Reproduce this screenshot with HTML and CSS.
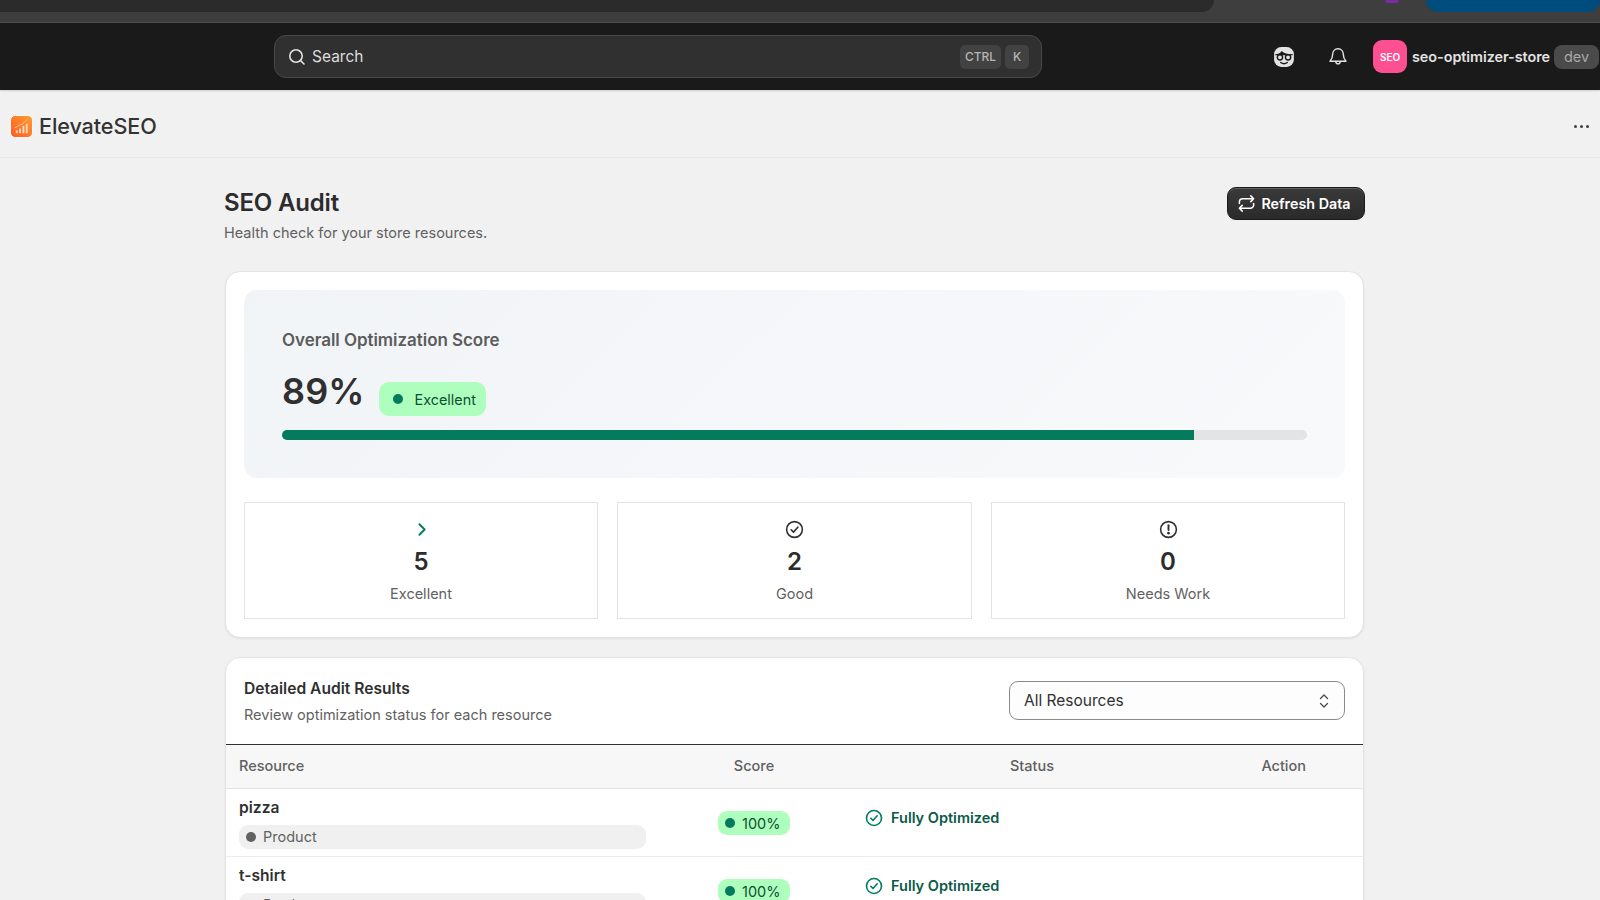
FILE: index.html
```html
<!DOCTYPE html>
<html lang="en">
<head>
<meta charset="utf-8">
<title>ElevateSEO - SEO Audit</title>
<link rel="stylesheet" href="styles.css">
</head>
<body>
<div class="chrome">
  <div class="chrome-tab"></div>
  <div class="chrome-dot"></div>
  <div class="chrome-blue"></div>
</div>
<header class="topbar">
  <div class="search">
    <svg class="search-icon" viewBox="0 0 20 20" fill="none" stroke="#e3e3e3" stroke-width="1.6" stroke-linecap="round"><circle cx="9" cy="9" r="6.2"/><path d="M13.6 13.6 17 17"/></svg>
    <span class="search-text">Search</span>
    <span class="kbd kbd-ctrl">CTRL</span>
    <span class="kbd kbd-k">K</span>
  </div>
  <div class="top-actions">
    <svg class="face" viewBox="0 0 20 20"><rect x="1" y="1" width="18" height="18" rx="6.500" fill="#e3e3e3"/><path d="M2 7.500c2.500 0 4.500-1 6-3 1.800 2 5 3 10 3v1H2z" fill="#1a1a1a"/><circle cx="6.300" cy="10.300" r="2.400" fill="#e3e3e3" stroke="#1a1a1a" stroke-width="1.300"/><circle cx="13.700" cy="10.300" r="2.400" fill="#e3e3e3" stroke="#1a1a1a" stroke-width="1.300"/><path d="M7 15c2 1.400 4 1.400 6 0" fill="none" stroke="#1a1a1a" stroke-width="1.300" stroke-linecap="round"/></svg>
    <svg class="bell" viewBox="0 0 20 20" fill="none" stroke="#e3e3e3" stroke-width="1.400" stroke-linecap="round" stroke-linejoin="round"><path d="M10 1.800c-3.200 0-5.300 2.400-5.300 5.500 0 3.200-.8 5-2.700 7h16c-1.900-2-2.700-3.800-2.700-7 0-3.100-2.100-5.500-5.300-5.500z"/><path d="M7.800 14.500c0 3.200 4.400 3.200 4.400 0"/></svg>
    <div class="avatar">SEO</div>
    <span class="store">seo-optimizer-store</span>
    <span class="dev">dev</span>
  </div>
</header>
<div class="appbar">
  <div class="brand">
    <svg class="logo" viewBox="0 0 24 24"><defs><linearGradient id="lg" x1="1" y1="0" x2="0" y2="1"><stop offset="0" stop-color="#ff9d2e"/><stop offset="1" stop-color="#fb5a24"/></linearGradient></defs><rect x=".5" y=".5" width="23" height="23" rx="5" fill="url(#lg)" stroke="#fff"/><path d="M7 19v-3M10.500 19v-5M14 19v-7.500M17.500 19V9" stroke="#ffd9bd" stroke-width="2" fill="none"/><path d="M5 13.500l5-3 3-1 5-5" stroke="#ffc9a0" stroke-width="1" fill="none"/></svg>
    <span class="brand-name">ElevateSEO</span>
  </div>
  <div class="more"><i></i><i></i><i></i></div>
</div>
<div class="viewport">
<main class="page">
  <div class="page-head">
    <div>
      <h1 class="page-title">SEO Audit</h1>
      <p class="page-sub">Health check for your store resources.</p>
    </div>
    <button class="refresh">
      <svg class="refresh-icon" viewBox="0 0 20 20" fill="none" stroke="#fff" stroke-width="1.600" stroke-linecap="round" stroke-linejoin="round"><path d="M2.500 10V8.500a3.500 3.500 0 0 1 3.500-3.500h11.500M14.500 2l3 3-3 3M17.500 10v1.500a3.500 3.500 0 0 1-3.500 3.500H2.500M5.500 18l-3-3 3-3"/></svg>
      Refresh Data
    </button>
  </div>

  <section class="card score-card">
    <div class="score-panel">
      <div class="score-label">Overall Optimization Score</div>
      <div class="score-row">
        <span class="score-value">89%</span>
        <span class="badge-lg"><i class="dot"></i>Excellent</span>
      </div>
      <div class="progress"><div class="progress-fill" style="width:89%"></div></div>
    </div>
    <div class="stats">
      <div class="stat">
        <svg class="stat-icon" viewBox="0 0 20 20" fill="none" stroke="#047b5d" stroke-width="1.800" stroke-linecap="round" stroke-linejoin="round"><path d="M8 5l5 5-5 5"/></svg>
        <div class="stat-num">5</div>
        <div class="stat-label">Excellent</div>
      </div>
      <div class="stat">
        <svg class="stat-icon" viewBox="0 0 20 20" fill="none" stroke="#303030" stroke-width="1.500" stroke-linecap="round" stroke-linejoin="round"><circle cx="10" cy="10" r="7.500"/><path d="M6.800 10.300l2.200 2.200 4.200-4.700"/></svg>
        <div class="stat-num">2</div>
        <div class="stat-label">Good</div>
      </div>
      <div class="stat">
        <svg class="stat-icon" viewBox="0 0 20 20" fill="none" stroke="#303030" stroke-width="1.500" stroke-linecap="round"><circle cx="10" cy="10" r="7.500"/><path d="M10 6v4.500" stroke-width="1.800"/><circle cx="10" cy="13.500" r=".6" fill="#303030"/></svg>
        <div class="stat-num">0</div>
        <div class="stat-label">Needs Work</div>
      </div>
    </div>
  </section>

  <section class="card results-card">
    <div class="results-head">
      <div>
        <h2 class="results-title">Detailed Audit Results</h2>
        <p class="results-sub">Review optimization status for each resource</p>
      </div>
      <div class="select">
        <span>All Resources</span>
        <svg class="select-icon" viewBox="0 0 12 20" fill="none" stroke="#4a4a4a" stroke-width="1.300" stroke-linecap="round" stroke-linejoin="round"><path d="M2.500 7.500L6 4l3.500 3.500M2.500 12.500L6 16l3.500-3.500"/></svg>
      </div>
    </div>
    <div class="tr th">
      <div class="c-res">Resource</div>
      <div class="c-score">Score</div>
      <div class="c-status">Status</div>
      <div class="c-action">Action</div>
    </div>
    <div class="tr row">
      <div class="c-res">
        <div class="res-name">pizza</div>
        <div class="res-type"><i class="dot-grey"></i>Product</div>
      </div>
      <div class="c-score"><span class="pct"><i class="dot-sm"></i>100%</span></div>
      <div class="c-status status-cell">
        <svg class="ok" viewBox="0 0 20 20" fill="none" stroke="#047b5d" stroke-width="1.600" stroke-linecap="round" stroke-linejoin="round"><circle cx="10" cy="10" r="7.500"/><path d="M6.800 10.300l2.200 2.200 4.200-4.700"/></svg>
        <span>Fully Optimized</span>
      </div>
      <div class="c-action"></div>
    </div>
    <div class="tr row">
      <div class="c-res">
        <div class="res-name">t-shirt</div>
        <div class="res-type"><i class="dot-grey"></i>Product</div>
      </div>
      <div class="c-score"><span class="pct"><i class="dot-sm"></i>100%</span></div>
      <div class="c-status status-cell">
        <svg class="ok" viewBox="0 0 20 20" fill="none" stroke="#047b5d" stroke-width="1.600" stroke-linecap="round" stroke-linejoin="round"><circle cx="10" cy="10" r="7.500"/><path d="M6.800 10.300l2.200 2.200 4.200-4.700"/></svg>
        <span>Fully Optimized</span>
      </div>
      <div class="c-action"></div>
    </div>
  </section>
</main>
</div>
</body>
</html>
```

FILE: styles.css
```css
* { box-sizing: border-box; }
html, body { margin: 0; height: 900px; overflow: hidden; }
body { background: #f1f1f1; font-family: Inter, "Liberation Sans", sans-serif; color: #303030; }
h1, h2, p { margin: 0; }
i { display: block; }

.chrome { height: 23px; background: #3e3e3e; border-bottom: 1px solid #4e4e4e; display: flex; align-items: flex-start; }
.chrome-tab { width: 1215px; height: 12px; background: #2b2b2b; border-radius: 0 0 16px 0; }
.chrome-dot { width: 14px; height: 3px; margin-left: 171px; background: #7b2aa6; border-radius: 0 0 7px 7px; }
.chrome-blue { width: 174px; height: 12px; margin-left: 27px; flex: none; background: #004c7c; border-radius: 0 0 14px 14px; }

.topbar { height: 67px; background: #1a1a1a; padding: 12px 0 0 274px; display: flex; align-items: flex-start; box-shadow: 0 1px 2px rgba(0,0,0,.15); position: relative; }
.search { width: 768px; height: 43px; flex: none; background: #303030; border: 1px solid #484848; border-radius: 12px; display: flex; align-items: center; padding: 0 12px 0 12px; }
.search-icon { width: 20px; height: 20px; flex: none; }
.search-text { margin-left: 5px; color: #dcdcdc; font-size: 15.500px; line-height: 20px; flex: 1; }
.kbd { height: 24px; background: #424242; color: #b5b5b5; font-size: 12px; font-weight: 500; border-radius: 5px; display: flex; align-items: center; justify-content: center; }
.kbd-ctrl { width: 41px; }
.kbd-k { width: 24px; margin-left: 4px; }
.top-actions { display: flex; align-items: center; height: 43px; margin-left: 231px; flex: none; }
.face { width: 22px; height: 22px; flex: none; margin-right: 33px; margin-top: 1px; }
.bell { width: 20px; height: 20px; flex: none; margin-right: 25px; }
.avatar { width: 34px; height: 33px; border-radius: 9px; background: #ff4f93; color: #fff; font-size: 10px; font-weight: 600; display: flex; align-items: center; justify-content: center; flex: none; }
.store { margin-left: 5px; color: #e3e3e3; font-size: 14.400px; font-weight: 600; white-space: nowrap; letter-spacing: -.05px; }
.dev { margin-left: 4px; width: 45px; height: 24px; background: #4a4a4a; color: #a8a8a8; border-radius: 8px; font-size: 14.500px; display: flex; align-items: center; justify-content: center; flex: none; }

.appbar { height: 68px; border-bottom: 1px solid #e7e7e7; display: flex; align-items: center; justify-content: space-between; padding: 5px 11px 0 10px; }
.brand { display: flex; align-items: center; }
.logo { width: 23px; height: 23px; flex: none; }
.brand-name { margin-left: 6px; font-size: 21.600px; font-weight: 500; color: #333; letter-spacing: -.1px; }
.more { display: flex; gap: 3px; }
.more i { width: 3px; height: 3px; border-radius: 50%; background: #404040; }

.viewport { padding-right: 11px; }
.page { width: 1139px; margin: 0 auto; padding-top: 29px; }
.page-head { display: flex; justify-content: space-between; align-items: flex-start; height: 84px; margin-left: -1px; }
.page-title { font-size: 24px; font-weight: 600; line-height: 32px; color: #2c2c2c; letter-spacing: -.17px; }
.page-sub { margin-top: 4px; font-size: 14.500px; line-height: 20px; color: #616161; }
.refresh { margin-right: -1px; width: 138px; height: 33px; background: linear-gradient(#3a3a3a, #2a2a2a); border: 1px solid #1a1a1a; border-radius: 9px; box-shadow: inset 0 1px 0 rgba(255,255,255,.2); color: #fff; font: 600 14.300px Inter, "Liberation Sans", sans-serif; display: flex; align-items: center; justify-content: center; gap: 5px; padding: 0 4px 0 0; }
.refresh-icon { width: 19px; height: 19px; flex: none; }

.card { background: #fff; border: 1px solid #e3e3e3; border-radius: 15px; box-shadow: 0 1px 2px rgba(0,0,0,.08); }
.score-card { height: 367px; padding: 18px 18px 0; }
.score-panel { height: 188px; background: linear-gradient(135deg, #f1f4f7, #f8f9fb); border-radius: 13px; padding: 40px 38px 0; }
.score-label { font-size: 17px; font-weight: 600; line-height: 20px; color: #5c5c5c; letter-spacing: -.05px; }
.score-row { display: flex; align-items: flex-start; margin-top: 19px; height: 49px; }
.score-value { font-size: 36px; font-weight: 600; line-height: 44px; color: #303030; letter-spacing: .1px; }
.badge-lg { margin-left: 14px; margin-top: 13px; width: 107px; height: 34px; border-radius: 10px; background: #aefebd; color: #0c5132; font-size: 14.400px; display: flex; align-items: center; padding-left: 14px; }
.dot { width: 10px; height: 10px; border-radius: 50%; background: #047b5d; margin-right: 12px; }
.progress { margin-top: 12px; height: 10px; width: 1025px; border-radius: 5px; background: #e3e4e6; overflow: hidden; }
.progress-fill { height: 100%; background: #047b5d; }

.stats { display: grid; grid-template-columns: 354px 355px 354px; gap: 19px; margin-top: 24px; }
.stat { height: 117px; border: 1px solid #e3e3e3; display: flex; flex-direction: column; align-items: center; padding-top: 16px; }
.stat-icon { width: 21px; height: 21px; flex: none; }
.stat-num { margin-top: 6px; font-size: 24px; font-weight: 600; line-height: 32px; color: #2c2c2c; }
.stat-label { margin-top: 6px; font-size: 14.500px; line-height: 20px; color: #616161; }

.results-card { margin-top: 19px; height: 400px; overflow: hidden; }
.results-head { height: 87px; padding: 0 18px; display: flex; justify-content: space-between; border-bottom: 1px solid #303030; }
.results-title { margin-top: 21px; font-size: 15.600px; font-weight: 600; line-height: 20px; color: #303030; }
.results-sub { margin-top: 6px; font-size: 14.500px; line-height: 20px; color: #616161; }
.select { margin-top: 23px; width: 336px; height: 39px; background: #fdfdfd; border: 1px solid #8a8a8a; border-radius: 9px; padding: 0 14px 0 14px; display: flex; align-items: center; justify-content: space-between; font-size: 15.500px; color: #303030; }
.select-icon { width: 12px; height: 20px; flex: none; }

.tr { display: grid; grid-template-columns: 433px 190px 205px 1fr; }
.th { height: 44px; background: #f7f7f7; border-bottom: 1px solid #e3e3e3; align-items: center; padding-bottom: 2px; font-size: 14.500px; font-weight: 500; color: #616161; }
.th .c-status { text-align: right; }
.th .c-action { text-align: right; padding-right: 57px; }
.c-res { padding: 0 13px; }
.c-score { text-align: center; }
.row { height: 68px; border-bottom: 1px solid #ebebeb; }
.res-name { margin-top: 9px; font-size: 15.600px; font-weight: 600; line-height: 20px; color: #303030; }
.res-type { margin-top: 7px; height: 24px; background: #f0f0f0; border-radius: 9px; display: flex; align-items: center; padding-left: 7px; padding-bottom: 1px; font-size: 14.500px; color: #616161; }
.dot-grey { width: 10px; height: 10px; border-radius: 50%; background: #616161; margin-right: 7px; }
.pct { display: inline-flex; align-items: center; margin-top: 22px; width: 72px; height: 24px; border-radius: 9px; background: #aefebd; color: #0c5132; font-size: 14.500px; padding-left: 7px; }
.dot-sm { width: 10px; height: 10px; border-radius: 50%; background: #047b5d; margin-right: 7px; }
.status-cell { display: flex; align-items: flex-start; padding: 19px 0 0 15px; font-size: 14.500px; font-weight: 600; color: #0c5a48; white-space: nowrap; line-height: 20px; }
.ok { width: 20px; height: 20px; flex: none; margin-right: 7px; }
```
